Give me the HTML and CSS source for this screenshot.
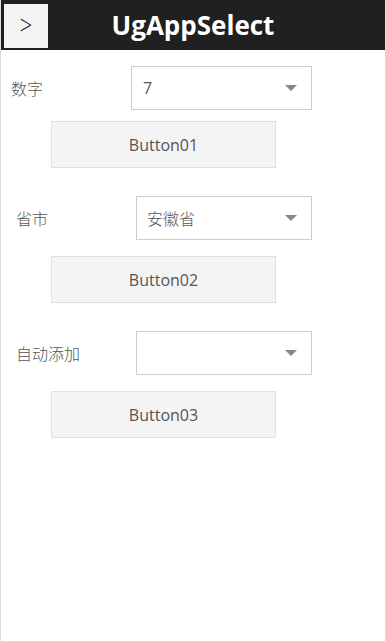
FILE: index.html
```html
<!DOCTYPE html>
<html lang="zh">
<head>
  <meta charset="UTF-8">
  <title>UgAppSelect</title>
  <link rel="stylesheet" href="styles.css">
</head>
<body>
  <div class="page">
    <div class="header">
      <button type="button" class="back-btn"><span class="back-glyph">&gt;</span></button>
      <h1 class="title">UgAppSelect</h1>
    </div>

    <div class="field field-first">
      <span class="field-label">数字</span>
      <div class="select">
        <span class="select-value">7</span>
        <span class="select-arrow"></span>
      </div>
    </div>
    <button type="button" class="action-btn btn-near">Button01</button>

    <div class="field">
      <span class="field-label">省市</span>
      <div class="select">
        <span class="select-value cjk">安徽省</span>
        <span class="select-arrow"></span>
      </div>
    </div>
    <button type="button" class="action-btn">Button02</button>

    <div class="field">
      <span class="field-label">自动添加</span>
      <div class="select">
        <span class="select-value"></span>
        <span class="select-arrow"></span>
      </div>
    </div>
    <button type="button" class="action-btn">Button03</button>
  </div>
</body>
</html>
```

FILE: styles.css
```css
* {
  box-sizing: border-box;
}
body {
  margin: 0;
  font-family: "Open Sans", "Noto Sans CJK SC", sans-serif;
  color: #555;
}
.page {
  width: 386px;
  height: 642px;
  border: 1px solid #ddd;
  border-top: none;
  background: #fff;
}
.header {
  position: relative;
  height: 50px;
  background-color: #202020;
  display: flex;
  align-items: center;
  justify-content: center;
}
.back-btn {
  position: absolute;
  left: 3px;
  top: 4px;
  width: 44px;
  height: 44px;
  padding: 0 0 4px;
  border: none;
  background: #f4f4f4;
  color: #222;
  font-family: "Open Sans", sans-serif;
  font-size: 28px;
  font-weight: 300;
  line-height: 40px;
}
.back-glyph {
  display: inline-block;
  transform: scaleX(0.8);
}
.title {
  margin: 0;
  color: #fff;
  font-size: 26px;
  font-weight: 700;
  line-height: 50px;
}
.field {
  display: flex;
  align-items: center;
  margin-top: 28px;
  padding-left: 15px;
}
.field-first {
  margin-top: 16px;
  padding-left: 10px;
}
.field-label {
  width: 120px;
  font-size: 16px;
  font-weight: 300;
}
.select {
  width: 176px;
  height: 44px;
  border: 1px solid #ccc;
  display: flex;
  align-items: center;
  justify-content: space-between;
  padding: 0 14px 0 10px;
  font-size: 16px;
}
.field-first .select {
  width: 181px;
  padding-left: 11px;
}
.cjk {
  font-weight: 300;
}
.select-arrow {
  width: 0;
  height: 0;
  border-left: 6px solid transparent;
  border-right: 6px solid transparent;
  border-top: 6px solid #888;
}
.action-btn {
  display: block;
  width: 225px;
  height: 47px;
  margin: 16px 0 0 50px;
  border: 1px solid #e0e0e0;
  background: #f4f4f4;
  color: #555;
  font-family: "Open Sans", sans-serif;
  font-size: 16px;
}
.btn-near {
  margin-top: 11px;
}
```
